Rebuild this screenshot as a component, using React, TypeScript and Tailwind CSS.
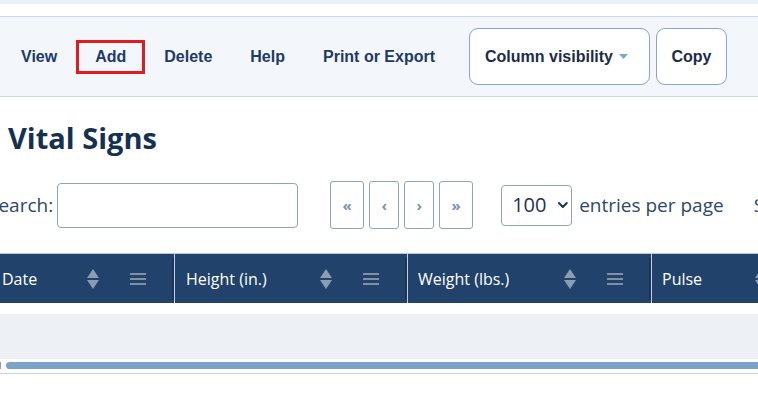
import { ChevronDown } from "lucide-react";

const navItems = ["View", "Add", "Delete", "Help", "Print or Export"];

const columns = [
  { label: "Date", width: "w-[175px]", pad: "pl-[2px]" },
  { label: "Height (in.)", width: "w-[233px]", pad: "pl-[11px]" },
  { label: "Weight (lbs.)", width: "w-[244px]", pad: "pl-[10px]" },
  { label: "Pulse", width: "w-[190px]", pad: "pl-[10px]" },
];

function SortIcon() {
  return (
    <svg width="12" height="22" viewBox="0 0 12 22" className="shrink-0">
      <path d="M6 1 L12 10 L0 10 Z" fill="#8b9db3" />
      <path d="M6 21 L12 12 L0 12 Z" fill="#8b9db3" />
    </svg>
  );
}

function MenuIcon() {
  return (
    <svg width="16" height="12" viewBox="0 0 16 12" className="shrink-0">
      <rect x="0" y="0" width="16" height="2" fill="#7f90a7" />
      <rect x="0" y="5" width="16" height="2" fill="#7f90a7" />
      <rect x="0" y="10" width="16" height="2" fill="#7f90a7" />
    </svg>
  );
}

export default function App() {
  return (
    <div className="w-[758px] h-[393px] overflow-hidden bg-white font-['Open_Sans',sans-serif]">
      <div className="h-[4px] bg-[#eaf1f9]" />
      <div className="h-[13px] bg-white border-b border-[#cdd8e6]" />

      {/* Toolbar */}
      <div className="h-[80px] bg-[#f3f7fc] border-b border-[#cdd8e6] flex items-center pl-[2px] whitespace-nowrap font-['Liberation_Sans',Arial,sans-serif]">
        {navItems.map((item) => (
          <div
            key={item}
            className={`shrink-0 h-[34px] px-[16px] flex items-center text-[16px] font-bold text-[#213a68] border-[3px] ${
              item === "Add" ? "border-[#e21c1c]" : "border-transparent"
            }`}
          >
            {item}
          </div>
        ))}
        <button className="shrink-0 ml-[15px] h-[57px] w-[181px] rounded-[9px] border border-[#8da5c1] bg-white flex items-center pl-[15px] text-[16px] font-bold text-[#1b2c45]">
          Column visibility
          <svg width="9" height="5" viewBox="0 0 9 5" className="ml-[6px]">
            <path d="M0 0 L9 0 L4.5 5 Z" fill="#7ba6d0" />
          </svg>
        </button>
        <button className="shrink-0 ml-[6px] h-[57px] w-[71px] rounded-[9px] border border-[#8da5c1] bg-white flex items-center justify-center text-[16px] font-bold text-[#1b2c45]">
          Copy
        </button>
      </div>

      {/* Heading */}
      <h1 className="pl-[8px] pt-[22px] text-[29px] leading-[38px] font-bold text-[#163150]">
        Vital Signs
      </h1>

      {/* Controls */}
      <div className="mt-[24px] flex items-center h-[48px] -ml-[12px] text-[19px] text-[#2d4868] whitespace-nowrap">
        <span className="shrink-0">Search:</span>
        <input className="shrink-0 ml-[4px] w-[241px] h-[45px] rounded-[4px] border border-[#8da5c1] bg-white" />
        <div className="shrink-0 ml-[32px] flex gap-[5px]">
          {["«", "‹", "›", "»"].map((g, i) => (
            <div
              key={i}
              className={`shrink-0 h-[48px] ${i === 0 || i === 3 ? "w-[34px]" : "w-[30px]"} rounded-[3px] border border-[#8da5c1] flex items-center justify-center text-[15px] font-bold text-[#7593b6] bg-white`}
            >
              {g}
            </div>
          ))}
        </div>
        <div className="shrink-0 ml-[28px] h-[41px] w-[71px] rounded-[4px] border border-[#8da5c1] flex items-center pl-[10px] text-[20px] text-[#1d3350] bg-white">
          100
          <ChevronDown size={16} strokeWidth={3} className="ml-[9px] text-[#1d3350]" />
        </div>
        <span className="shrink-0 ml-[7px]">entries per page</span>
        <span className="shrink-0 ml-[30px]">Showing</span>
      </div>

      {/* Table header */}
      <div className="mt-[24px] h-[50px] flex bg-[#21426a] border-t border-[#b9c8da] whitespace-nowrap">
        {columns.map((c, i) => (
          <div
            key={c.label}
            className={`${c.width} shrink-0 h-full flex items-center ${c.pad} text-[16px] text-white ${
              i < columns.length - 1 ? "border-r border-[#c2d0e1]" : ""
            }`}
          >
            <span className="flex-1">{c.label}</span>
            <SortIcon />
            <div className="ml-[31px] mr-[26px]">
              <MenuIcon />
            </div>
            <div className="w-[2px] h-[42px] bg-[#1a3558]" />
          </div>
        ))}
      </div>

      {/* Empty row */}
      <div className="mt-[11px] h-[45px] bg-[#edf0f5]" />

      {/* Scrollbar */}
      <div className="mt-[3px] h-[7px] flex items-center">
        <div className="w-[1px] h-[7px] bg-[#7ba2c9]" />
        <div className="ml-[5px] flex-1 h-[7px] rounded-l-full bg-[#7ba2c9]" />
      </div>
      <div className="mt-[4px] h-[1px] bg-[#c4d4e8]" />
    </div>
  );
}
